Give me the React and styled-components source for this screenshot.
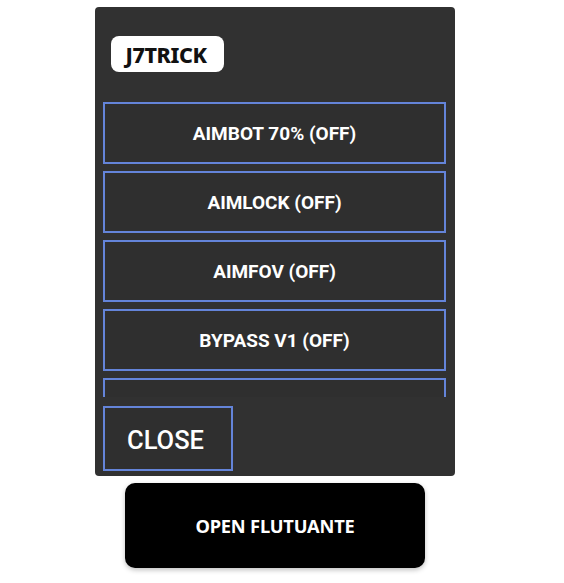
import React from "react";
import styled, { createGlobalStyle } from "styled-components";

const Global = createGlobalStyle`
  html, body { margin: 0; padding: 0; background: #ffffff; }
  body { font-family: Roboto, "Liberation Sans", sans-serif; }
`;

const Page = styled.div`
  width: 564px;
  height: 583px;
  padding: 7px 0 0 95px;
  box-sizing: border-box;
  display: flex;
  flex-direction: column;
  align-items: flex-start;
`;

const Panel = styled.div`
  width: 360px;
  height: 469px;
  box-sizing: border-box;
  background: #313131;
  border-radius: 4px;
  padding: 29px 9px 5px 8px;
  display: flex;
  flex-direction: column;
`;

const Title = styled.div`
  align-self: flex-start;
  margin-left: 8px;
  height: 36px;
  width: 113px;
  box-sizing: border-box;
  background: #ffffff;
  border-radius: 8px;
  display: flex;
  align-items: center;
  justify-content: center;
  padding-right: 3px;
  font-family: "Noto Sans", sans-serif;
  font-weight: 800;
  font-size: 21.5px;
  color: #111;
  letter-spacing: -0.4px;
`;

const List = styled.div`
  margin-top: 30px;
  height: 295px;
  overflow: hidden;
  display: flex;
  flex-direction: column;
  gap: 7px;
`;

const Option = styled.button`
  flex: 0 0 62px;
  width: 100%;
  box-sizing: border-box;
  background: #2f2f2f;
  border: 2px solid #6484d9;
  color: #ffffff;
  font-family: Roboto, sans-serif;
  font-weight: 700;
  font-size: 19px;
  display: flex;
  align-items: center;
  justify-content: center;
  padding: 0;
`;

const Close = styled.button`
  margin-top: 9px;
  width: 130px;
  height: 65px;
  box-sizing: border-box;
  background: #2f2f2f;
  border: 2px solid #6484d9;
  color: #ffffff;
  font-family: Roboto, sans-serif;
  font-weight: 500;
  font-size: 25.5px;
  text-align: left;
  padding: 3px 0 0 22px;
`;

const Open = styled.button`
  margin: 7px 0 0 30px;
  width: 300px;
  height: 85px;
  background: #000000;
  border: none;
  border-radius: 10px;
  box-shadow: 0 2px 5px rgba(0, 0, 0, 0.25);
  color: #ffffff;
  font-family: "Noto Sans", sans-serif;
  font-weight: 700;
  font-size: 18.3px;
  letter-spacing: -0.2px;
`;

const options = ["AIMBOT 70% (OFF)", "AIMLOCK (OFF)", "AIMFOV (OFF)", "BYPASS V1 (OFF)", ""];

export default function App() {
  return (
    <>
      <Global />
      <Page>
        <Panel>
          <Title>J7TRICK</Title>
          <List>
            {options.map((o, i) => (
              <Option key={i}>{o}</Option>
            ))}
          </List>
          <Close>CLOSE</Close>
        </Panel>
        <Open>OPEN FLUTUANTE</Open>
      </Page>
    </>
  );
}
